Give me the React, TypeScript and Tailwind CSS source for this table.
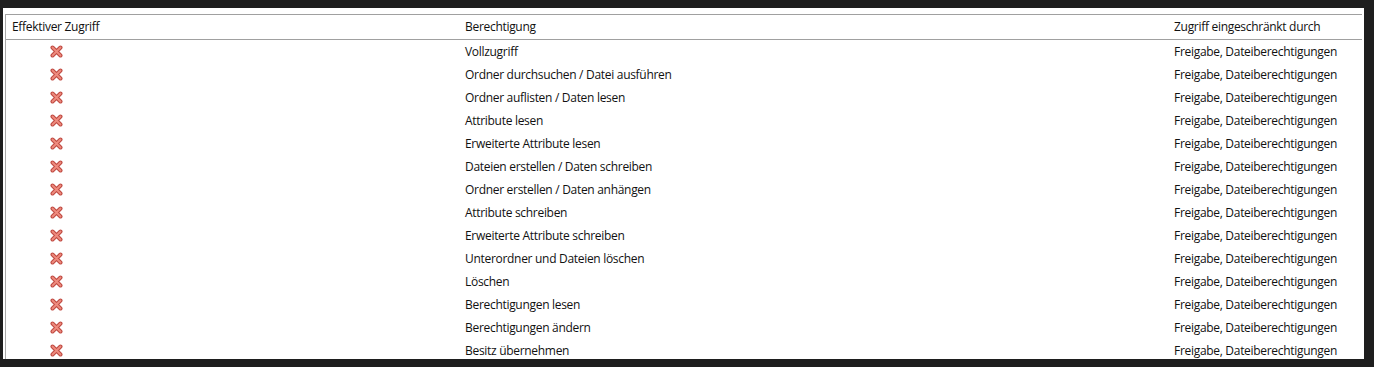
import React from "react";

const rows = [
  "Vollzugriff",
  "Ordner durchsuchen / Datei ausführen",
  "Ordner auflisten / Daten lesen",
  "Attribute lesen",
  "Erweiterte Attribute lesen",
  "Dateien erstellen / Daten schreiben",
  "Ordner erstellen / Daten anhängen",
  "Attribute schreiben",
  "Erweiterte Attribute schreiben",
  "Unterordner und Dateien löschen",
  "Löschen",
  "Berechtigungen lesen",
  "Berechtigungen ändern",
  "Besitz übernehmen",
];

const DenyIcon = () => (
  <svg width="13" height="13" viewBox="0 0 13 13">
    <path d="M2.5 2.5 L10.5 10.5 M10.5 2.5 L2.5 10.5" stroke="#bf4a42" strokeWidth="4" strokeLinecap="round" />
    <path d="M2.5 2.5 L10.5 10.5 M10.5 2.5 L2.5 10.5" stroke="#ee8b7e" strokeWidth="1.8" strokeLinecap="round" />
  </svg>
);

const App = () => {
  return (
    <div className="w-[1374px] h-[367px] bg-[#1e1e1e] pt-2 pl-[3px] overflow-hidden" style={{ fontFamily: '"Open Sans", "Noto Sans", sans-serif' }}>
      <div className="w-[1361px] h-[351px] bg-white pl-[2px] pt-[6px] overflow-hidden">
        <div className="h-full border-l border-[#a9a9a9] text-[12px] tracking-[-0.3px] text-[#111]">
          <div className="flex h-[26px] items-center border-y border-[#a0a0a0] mr-[2px]">
            <div className="w-[453px] pl-[6px]">Effektiver Zugriff</div>
            <div className="w-[709px] pl-[6px]">Berechtigung</div>
            <div className="pl-[6px]">Zugriff eingeschränkt durch</div>
          </div>
          {rows.map((r) => (
            <div key={r} className="flex h-[23px] items-center">
              <div className="w-[453px] pl-[44px] flex items-center">
                <DenyIcon />
              </div>
              <div className="w-[709px] pl-[6px]">{r}</div>
              <div className="pl-[6px]">Freigabe, Dateiberechtigungen</div>
            </div>
          ))}
        </div>
      </div>
    </div>
  );
};

export default App;
